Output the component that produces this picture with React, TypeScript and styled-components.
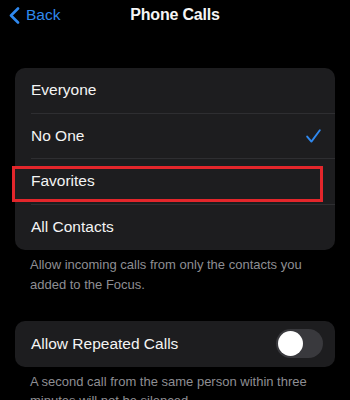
import React from 'react';
import styled, { createGlobalStyle } from 'styled-components';

const GlobalStyle = createGlobalStyle`
    html, body {
        margin: 0;
        padding: 0;
        background: #000;
    }
    body {
        font-family: 'Liberation Sans', Arial, sans-serif;
        -webkit-font-smoothing: antialiased;
    }
`;

const Screen = styled.div`
    width: 350px;
    height: 400px;
    overflow: hidden;
    background: #000;
    display: flex;
    flex-direction: column;

    & > * {
        flex-shrink: 0;
    }
`;

const NavBar = styled.div`
    position: relative;
    height: 30px;
    display: flex;
    align-items: center;
    justify-content: center;
`;

const BackButton = styled.div`
    position: absolute;
    left: 8px;
    top: 6px;
    display: flex;
    align-items: center;
    gap: 6px;
    color: #2f88ee;
    font-size: 15.5px;
`;

const Title = styled.div`
    color: #f5f5f5;
    font-size: 16px;
    font-weight: 700;
    letter-spacing: -0.2px;
`;

const Card = styled.div<{ $top: number }>`
    margin: ${(p) => p.$top}px 15px 0;
    background: #1d1d1f;
    border-radius: 10px;
    display: flex;
    flex-direction: column;
`;

const Row = styled.div<{ $divider?: boolean }>`
    position: relative;
    height: 45.5px;
    margin-left: 16px;
    padding-right: 14px;
    display: flex;
    align-items: center;
    justify-content: space-between;
    color: #f4f4f4;
    font-size: 15.5px;
    border-bottom: ${(p) => (p.$divider ? '1px solid #2e2e31' : 'none')};
    box-sizing: border-box;
`;

const Highlight = styled.div`
    position: absolute;
    left: -19px;
    right: 12px;
    top: 7px;
    bottom: 2px;
    border: 3px solid #e3262b;
    pointer-events: none;
`;

const Footer = styled.div<{ $top: number }>`
    margin-top: ${(p) => p.$top}px;
    padding: 0 30px;
    color: #8e8e93;
    font-size: 13px;
    line-height: 19.5px;
`;

const Toggle = styled.div`
    width: 47px;
    height: 29px;
    margin-right: -2px;
    border-radius: 15px;
    background: #39393d;
    display: flex;
    align-items: center;
    padding: 0 2px;
    box-sizing: border-box;
`;

const Knob = styled.div`
    width: 25px;
    height: 25px;
    border-radius: 50%;
    background: #fff;
`;

const Chevron = () => (
    <svg width="12" height="17" viewBox="0 0 12 17">
        <path d="M10 1.5 L3 8.5 L10 15.5" fill="none" stroke="#2f88ee" strokeWidth="2.6" strokeLinecap="round" strokeLinejoin="round" />
    </svg>
);

const Check = () => (
    <svg width="15" height="14" viewBox="0 0 15 14">
        <path d="M1.2 7.6 L5.4 12.6 L13.8 1.2" fill="none" stroke="#2f88ee" strokeWidth="1.9" strokeLinecap="round" strokeLinejoin="round" />
    </svg>
);

const options = ['Everyone', 'No One', 'Favorites', 'All Contacts'];

export default function App() {
    return (
        <Screen>
            <GlobalStyle />
            <NavBar>
                <BackButton>
                    <Chevron />
                    <span>Back</span>
                </BackButton>
                <Title>Phone Calls</Title>
            </NavBar>
            <Card $top={38}>
                {options.map((opt, i) => (
                    <Row key={opt} $divider={i < options.length - 1}>
                        <span>{opt}</span>
                        {opt === 'No One' && <Check />}
                        {opt === 'Favorites' && <Highlight />}
                    </Row>
                ))}
            </Card>
            <Footer $top={5}>
                Allow incoming calls from only the contacts you added to the Focus.
            </Footer>
            <Card $top={27}>
                <Row>
                    <span>Allow Repeated Calls</span>
                    <Toggle>
                        <Knob />
                    </Toggle>
                </Row>
            </Card>
            <Footer $top={5}>
                A second call from the same person within three minutes will not be silenced.
            </Footer>
        </Screen>
    );
}
